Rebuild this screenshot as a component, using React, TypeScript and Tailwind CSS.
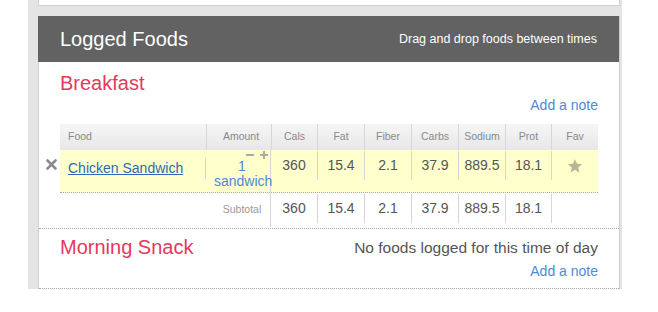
import React from "react";

const cols = [
  { key: "cals", label: "Cals", w: "w-[46px]" },
  { key: "fat", label: "Fat", w: "w-[47px]" },
  { key: "fiber", label: "Fiber", w: "w-[47px]" },
  { key: "carbs", label: "Carbs", w: "w-[47px]" },
  { key: "sodium", label: "Sodium", w: "w-[47px]" },
  { key: "prot", label: "Prot", w: "w-[46px]" },
];

const food = {
  name: "Chicken Sandwich",
  amount: "1",
  unit: "sandwich",
  values: ["360", "15.4", "2.1", "37.9", "889.5", "18.1"],
};

function RemoveIcon() {
  return (
    <svg width="11" height="11" viewBox="0 0 11 11">
      <path d="M1.5 1.5l8 8M9.5 1.5l-8 8" stroke="#8c8c8c" strokeWidth="2.6" strokeLinecap="round" />
    </svg>
  );
}

function Star() {
  return (
    <svg width="16" height="16" viewBox="0 0 24 24">
      <path d="M12 1.8l3 7 7.5.6-5.7 4.9 1.8 7.4L12 17.7l-6.6 4 1.8-7.4L1.5 9.4 9 8.8z" fill="#b6b594" />
    </svg>
  );
}

function AddNote() {
  return (
    <div className="flex justify-end">
      <a className="text-[14px] leading-[16px] text-[#4d8ad9] cursor-pointer">Add a note</a>
    </div>
  );
}

export default function App() {
  return (
    <div className="w-[658px] h-[312px] bg-white font-['Liberation_Sans',Arial,sans-serif] text-[#555]">
      <div className="ml-[28px] w-[594px] bg-[#e4e4e4] pl-[10px] pr-[2px]">
        <div className="h-[6px] bg-white border-l border-r border-b border-[#cfcfcf]" />
        <div className="h-[10px]" />
        <div className="bg-white border-l border-r border-[#cfcfcf]">
          <div className="h-[46px] -ml-px bg-[#626262] flex items-center justify-between pl-[22px] pr-[22px]">
            <h2 className="text-[20px] leading-[23px] text-white">Logged Foods</h2>
            <span className="text-[12.5px] text-white">Drag and drop foods between times</span>
          </div>

          {/* Breakfast */}
          <section className="pt-[10px] pb-[1px] pl-[21px] pr-[21px] border-b border-dotted border-[#a8a8a8]">
            <h3 className="text-[20px] leading-[23px] text-[#e2395d]">Breakfast</h3>
            <div className="mt-[2px]">
              <AddNote />
            </div>

            <div className="mt-[11px] w-[538px]">
              {/* header */}
              <div className="flex h-[26px] bg-linear-to-b from-[#f6f6f6] to-[#e7e7e7] text-[10.5px] text-[#8a8a8a]">
                <div className="w-[146px] pl-[8px] flex items-center">Food</div>
                <div className="w-[65px] border-l border-[#d6d6d6] flex items-center justify-center pl-[4px]">Amount</div>
                {cols.map((c) => (
                  <div key={c.key} className={`${c.w} border-l border-[#d6d6d6] flex items-center justify-center`}>
                    {c.label}
                  </div>
                ))}
                <div className="w-[47px] border-l border-[#d6d6d6] flex items-center justify-center">Fav</div>
              </div>

              {/* food row */}
              <div className="flex -ml-[16px]">
                <div className="w-[16px] pt-[9px] pl-[2px]">
                  <RemoveIcon />
                </div>
                <div className="flex h-[43px] w-[538px] bg-[#ffffcc] border-b border-dotted border-[#a8a8a8]">
                  <div className="w-[146px] flex">
                    <div className="flex-1 pl-[8px] pt-[6px]">
                      <a className="text-[14px] leading-[16px] text-[#3267b4] underline cursor-pointer">{food.name}</a>
                    </div>
                    <div className="w-px h-[21px] mt-[8px] bg-[#d6d6d6]" />
                  </div>
                  <div className="w-[65px] border-r border-[#d6d6d6] pl-[8px] text-center text-[#4d8ad9]">
                    <div className="h-[9px] flex items-center justify-end gap-[6px] pr-[2px]">
                      <svg width="8" height="8" viewBox="0 0 8 8">
                        <path d="M0 4h8" stroke="#a9a9a9" strokeWidth="2" />
                      </svg>
                      <svg width="8" height="8" viewBox="0 0 8 8">
                        <path d="M0 4h8M4 0v8" stroke="#a9a9a9" strokeWidth="2" />
                      </svg>
                    </div>
                    <div className="text-[14px] leading-[15px] whitespace-nowrap">
                      <div>{food.amount}</div>
                      <div>{food.unit}</div>
                    </div>
                  </div>
                  {cols.map((c, i) => (
                    <div key={c.key} className={`${c.w}`}>
                      <div
                        className={`h-[29px] mt-[1px] flex items-center justify-center text-[14px] ${
                          i === 0 ? "" : "border-l border-[#d6d6d6]"
                        }`}
                      >
                        {food.values[i]}
                      </div>
                    </div>
                  ))}
                  <div className="w-[47px]">
                    <div className="h-[29px] mt-[1px] flex items-center justify-center border-l border-[#d6d6d6]">
                      <Star />
                    </div>
                  </div>
                </div>
              </div>

              {/* subtotal row */}
              <div className="flex h-[34px]">
                <div className="w-[146px]" />
                <div className="w-[65px] border-r border-[#d6d6d6] pl-[8px] flex items-center justify-center text-[10.5px] text-[#999]">
                  Subtotal
                </div>
                {cols.map((c, i) => (
                  <div key={c.key} className={`${c.w}`}>
                    <div
                      className={`h-[29px] mt-[1px] flex items-center justify-center text-[14px] ${
                        i === 0 ? "" : "border-l border-[#d6d6d6]"
                      }`}
                    >
                      {food.values[i]}
                    </div>
                  </div>
                ))}
                <div className="w-[47px]">
                  <div className="h-[29px] mt-[1px] border-l border-[#d6d6d6]" />
                </div>
              </div>
            </div>
          </section>

          {/* Morning Snack */}
          <section className="pt-[7px] pb-[9px] pl-[21px] pr-[21px] border-b border-dotted border-[#a8a8a8]">
            <div className="flex items-center justify-between">
              <h3 className="text-[20px] leading-[23px] text-[#e2395d]">Morning Snack</h3>
              <span className="text-[15.5px] leading-[16px] text-[#555]">No foods logged for this time of day</span>
            </div>
            <div className="mt-[4px]">
              <AddNote />
            </div>
          </section>
        </div>
      </div>
    </div>
  );
}
